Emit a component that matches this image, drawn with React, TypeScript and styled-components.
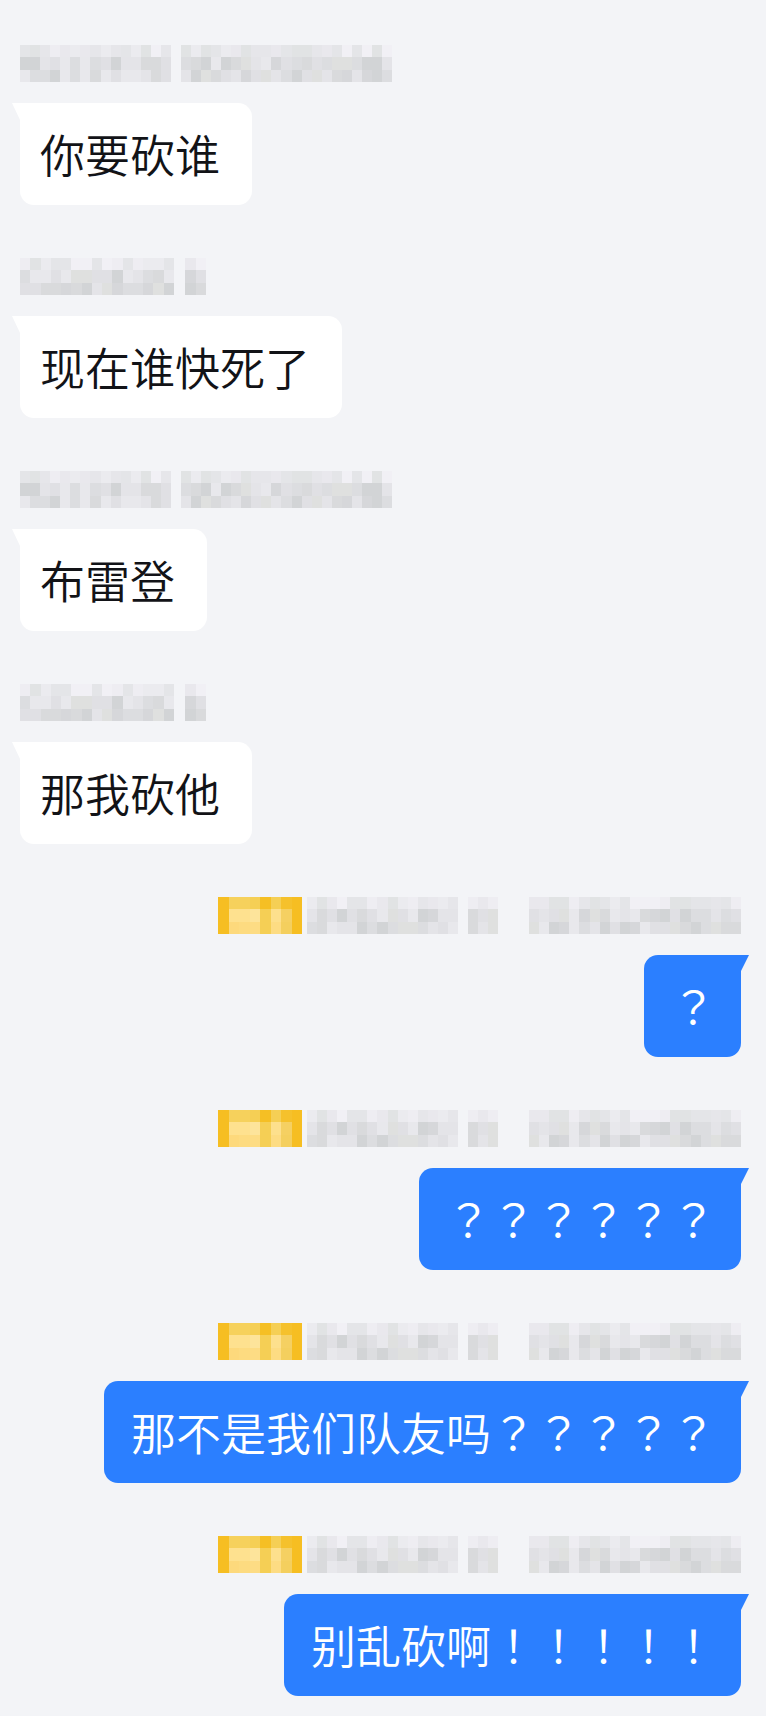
import React from "react";
import styled, { createGlobalStyle, css } from "styled-components";

const GlobalStyle = createGlobalStyle`
  html, body {
    margin: 0;
    padding: 0;
    background: #f3f4f7;
  }
  body {
    font-family: "Noto Sans CJK SC", "Noto Sans", sans-serif;
  }
`;

type Side = "left" | "right";

const Page = styled.div`
  box-sizing: border-box;
  width: 766px;
  min-height: 1716px;
  padding: 45px 25px 20px 20px;
  display: flex;
  flex-direction: column;
  gap: 53px;
  background: #f3f4f7;
`;

const Message = styled.div<{ $side: Side }>`
  display: flex;
  flex-direction: column;
  align-items: ${(p) => (p.$side === "left" ? "flex-start" : "flex-end")};
  gap: 21px;
`;

const NameRow = styled.div`
  display: flex;
  height: 37px;
`;

const Chunk = styled.div<{ $cols: number; $w: number; $ml: number }>`
  display: grid;
  grid-template-columns: repeat(${(p) => p.$cols}, 1fr);
  grid-template-rows: repeat(3, 1fr);
  width: ${(p) => p.$w}px;
  margin-left: ${(p) => p.$ml}px;
  height: 100%;
`;

const Cell = styled.div<{ $c: string }>`
  background: ${(p) => p.$c};
`;

const Bubble = styled.div<{ $side: Side }>`
  position: relative;
  box-sizing: border-box;
  font-size: 45px;
  font-weight: 350;
  line-height: 62px;
  padding-top: 20px;
  padding-bottom: 20px;
  white-space: nowrap;
  ${(p) =>
    p.$side === "left"
      ? css`
          background: #ffffff;
          color: #121317;
          padding-left: 20px;
          padding-right: 32px;
          border-radius: 0 14px 14px 14px;
          &::before {
            content: "";
            position: absolute;
            top: 0;
            left: -8px;
            width: 9px;
            height: 19px;
            background: #ffffff;
            clip-path: polygon(0 0, 100% 0, 100% 100%);
          }
        `
      : css`
          background: #2b7fff;
          color: #ffffff;
          padding-left: 27px;
          padding-right: 25px;
          border-radius: 14px 0 14px 14px;
          &::before {
            content: "";
            position: absolute;
            top: 0;
            right: -8px;
            width: 9px;
            height: 18px;
            background: #2b7fff;
            clip-path: polygon(0 0, 100% 0, 0 100%);
          }
        `}
`;

/* full-width ？ and ！ sit centred in their cell, as in the TC cut */
const Punct = styled.span`
  font-family: "Noto Sans CJK TC", "Noto Sans CJK SC", sans-serif;
`;

function renderText(text: string) {
  const parts = text.split(/([？！]+)/).filter(Boolean);
  return parts.map((p, i) =>
    /^[？！]+$/.test(p) ? <Punct key={i}>{p}</Punct> : <React.Fragment key={i}>{p}</React.Fragment>
  );
}

// deterministic pseudo-random mosaic colours
function makeRng(seed: number) {
  let s = seed;
  return () => {
    s = (s * 9301 + 49297) % 233280;
    return s / 233280;
  };
}

const topPalette = ["#eeedf2", "#e9e8ed", "#e6e6ea", "#f1f0f5", "#e4e5e8", "#ebebef", "#e1e3e4"];
const lowPalette = ["#dcdde0", "#d6d7da", "#e0e0e4", "#d2d4d6", "#e4e4e8", "#d9dadc", "#e8e8ec", "#dfe0df"];

function grayCells(cols: number, seed: number): string[] {
  const rng = makeRng(seed);
  const out: string[] = [];
  for (let r = 0; r < 3; r++) {
    for (let c = 0; c < cols; c++) {
      const pal = r === 0 ? topPalette : lowPalette;
      out.push(pal[Math.floor(rng() * pal.length)]);
    }
  }
  return out;
}

const D = "#f6be22";
const yellowCells = [
  D, "#f6d15c", "#f6d15c", "#f5cf55", "#f5bf24", "#f5cf55", "#f5c12c", D,
  D, "#fee18f", "#fee18f", "#fde49b", "#f5cf55", "#fde08d", "#f5d062", D,
  D, "#fdd97c", "#fddb80", "#fddc84", "#f5cf55", "#fddc83", "#f4cf5e", D,
];

type ChunkDef = { w: number; cols: number; ml: number; cells: string[] };

const Mosaic: React.FC<{ chunks: ChunkDef[] }> = ({ chunks }) => (
  <NameRow>
    {chunks.map((ch, i) => (
      <Chunk key={i} $cols={ch.cols} $w={ch.w} $ml={ch.ml}>
        {ch.cells.map((c, j) => (
          <Cell key={j} $c={c} />
        ))}
      </Chunk>
    ))}
  </NameRow>
);

const longName = (seed: number): ChunkDef[] => [
  { w: 151, cols: 15, ml: 0, cells: grayCells(15, seed) },
  { w: 211, cols: 21, ml: 10, cells: grayCells(21, seed + 7) },
];

const shortName = (seed: number): ChunkDef[] => [
  { w: 154, cols: 15, ml: 0, cells: grayCells(15, seed) },
  { w: 21, cols: 2, ml: 11, cells: grayCells(2, seed + 3) },
];

const myName = (seed: number): ChunkDef[] => [
  { w: 84, cols: 8, ml: 0, cells: yellowCells },
  { w: 151, cols: 15, ml: 5, cells: grayCells(15, seed) },
  { w: 30, cols: 3, ml: 10, cells: grayCells(3, seed + 5) },
  { w: 212, cols: 21, ml: 31, cells: grayCells(21, seed + 11) },
];

type Msg = { side: Side; name: ChunkDef[]; text: string };

const messages: Msg[] = [
  { side: "left", name: longName(11), text: "你要砍谁" },
  { side: "left", name: shortName(23), text: "现在谁快死了" },
  { side: "left", name: longName(11), text: "布雷登" },
  { side: "left", name: shortName(23), text: "那我砍他" },
  { side: "right", name: myName(41), text: "？" },
  { side: "right", name: myName(41), text: "？？？？？？" },
  { side: "right", name: myName(41), text: "那不是我们队友吗？？？？？" },
  { side: "right", name: myName(41), text: "别乱砍啊！！！！！" },
];

export default function App() {
  return (
    <>
      <GlobalStyle />
      <Page>
        {messages.map((m, i) => (
          <Message key={i} $side={m.side}>
            <Mosaic chunks={m.name} />
            <Bubble $side={m.side}>{renderText(m.text)}</Bubble>
          </Message>
        ))}
      </Page>
    </>
  );
}
